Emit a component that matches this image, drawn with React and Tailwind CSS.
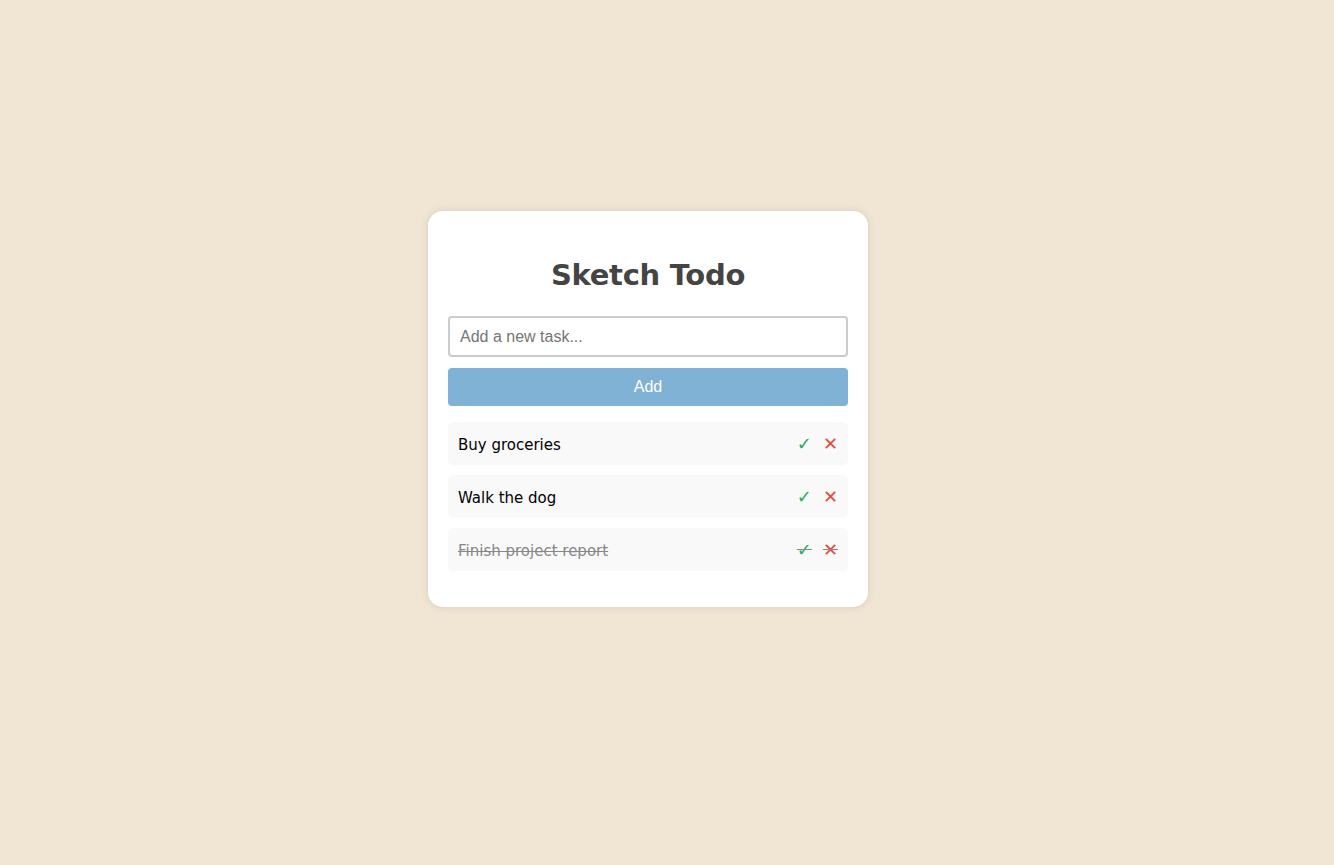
import React, { useState } from 'react'

const initialTodos = [
  { id: 1, text: 'Buy groceries', done: false },
  { id: 2, text: 'Walk the dog', done: false },
  { id: 3, text: 'Finish project report', done: true },
]

export default function App() {
  const [todos, setTodos] = useState(initialTodos)
  const [text, setText] = useState('')

  const addTodo = () => {
    if (!text.trim()) return
    setTodos([...todos, { id: Date.now(), text: text.trim(), done: false }])
    setText('')
  }

  const toggle = id => setTodos(todos.map(t => (t.id === id ? { ...t, done: !t.done } : t)))
  const remove = id => setTodos(todos.filter(t => t.id !== id))

  return (
    <div className="min-h-screen bg-[#f1e5d3] flex items-center justify-center pr-[38px] pb-[47px] font-['Comic_Sans_MS','DejaVu_Sans',sans-serif]">
      <div className="w-[440px] bg-white rounded-[15px] p-5 shadow-[0_0_10px_rgba(0,0,0,0.1)]">
        {/* Title */}
        <h1 className="text-center text-[29px] font-bold text-[#444] leading-[43px] mt-[23px] mb-[19px] tracking-[-0.3px]">
          Sketch Todo
        </h1>

        {/* Input + button */}
        <input
          value={text}
          onChange={e => setText(e.target.value)}
          placeholder="Add a new task..."
          className="block w-full h-[41px] px-[10px] border-2 border-[#ccc] rounded-[4px] text-[16px] font-['Liberation_Sans',Arial,sans-serif] text-[#333] placeholder:text-[#757575] outline-none"
        />
        <button
          onClick={addTodo}
          className="block w-full h-[38px] mt-[11px] bg-[#7fb2d5] text-white rounded-[4px] text-[16px] font-['Liberation_Sans',Arial,sans-serif]"
        >
          Add
        </button>

        {/* List */}
        <ul className="mt-4 mb-[16px] flex flex-col gap-[10px]">
          {todos.map(todo => (
            <li
              key={todo.id}
              className={`flex items-center justify-between bg-[#f9f9f9] rounded-[5px] px-[10px] h-[43px] text-[15px] ${
                todo.done ? 'line-through text-[#888]' : 'text-black'
              }`}
            >
              <span className="pt-[3px]">{todo.text}</span>
              <div className="flex items-center gap-[11px] pt-[1px]">
                <button onClick={() => toggle(todo.id)} className="text-[#27ae60] text-[18px] leading-none">
                  ✓
                </button>
                <button onClick={() => remove(todo.id)} className="text-[#e74c3c] text-[18px] leading-none">
                  ✕
                </button>
              </div>
            </li>
          ))}
        </ul>
      </div>
    </div>
  )
}
